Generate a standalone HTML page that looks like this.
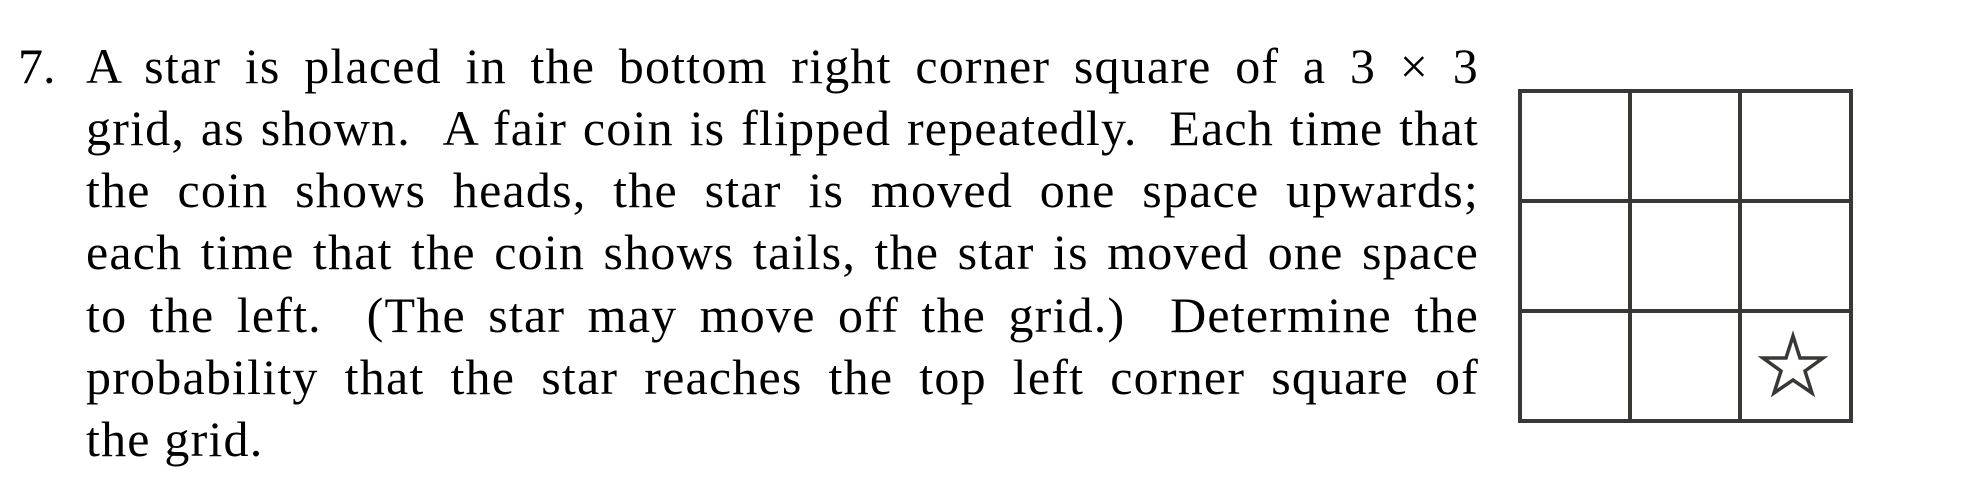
<!DOCTYPE html>
<html><head><meta charset="utf-8"><style>
html,body{margin:0;padding:0;background:#fff;width:1972px;height:502px;overflow:hidden}
.t{position:absolute;left:86px;top:34.5px;width:1393px;font-family:"Liberation Serif",serif;font-size:50px;line-height:62.3px;color:#000;letter-spacing:1.2px}
.l{text-align:justify;text-align-last:justify;white-space:nowrap;height:62.3px}
.l.last{text-align-last:left}
.n{position:absolute;left:18px;top:34.5px;font-family:"Liberation Serif",serif;font-size:50px;line-height:62.3px}
</style></head><body>
<div class="n">7.</div>
<div class="t">
<div class="l">A star is placed in the bottom right corner square of a 3 × 3</div>
<div class="l">grid, as shown. &nbsp;A fair coin is flipped repeatedly. &nbsp;Each time that</div>
<div class="l">the coin shows heads, the star is moved one space upwards;</div>
<div class="l">each time that the coin shows tails, the star is moved one space</div>
<div class="l">to the left. &nbsp;(The star may move off the grid.) &nbsp;Determine the</div>
<div class="l">probability that the star reaches the top left corner square of</div>
<div class="l last">the grid.</div>
</div>
<svg style="position:absolute;left:0;top:0" width="1972" height="502">
<g stroke="#383834" stroke-width="4" fill="none">
<rect x="1520" y="91" width="331" height="330"/>
<line x1="1630" y1="91" x2="1630" y2="421"/>
<line x1="1740" y1="91" x2="1740" y2="421"/>
<line x1="1520" y1="201" x2="1851" y2="201"/>
<line x1="1520" y1="311" x2="1851" y2="311"/>
<polygon stroke-width="3.5" stroke-linejoin="miter" points="1793,336 1800,358 1823,358 1805,371 1812,393 1793,380 1774,393 1781,371 1763,358 1786,358"/>
</g>
</svg>
</body></html>
